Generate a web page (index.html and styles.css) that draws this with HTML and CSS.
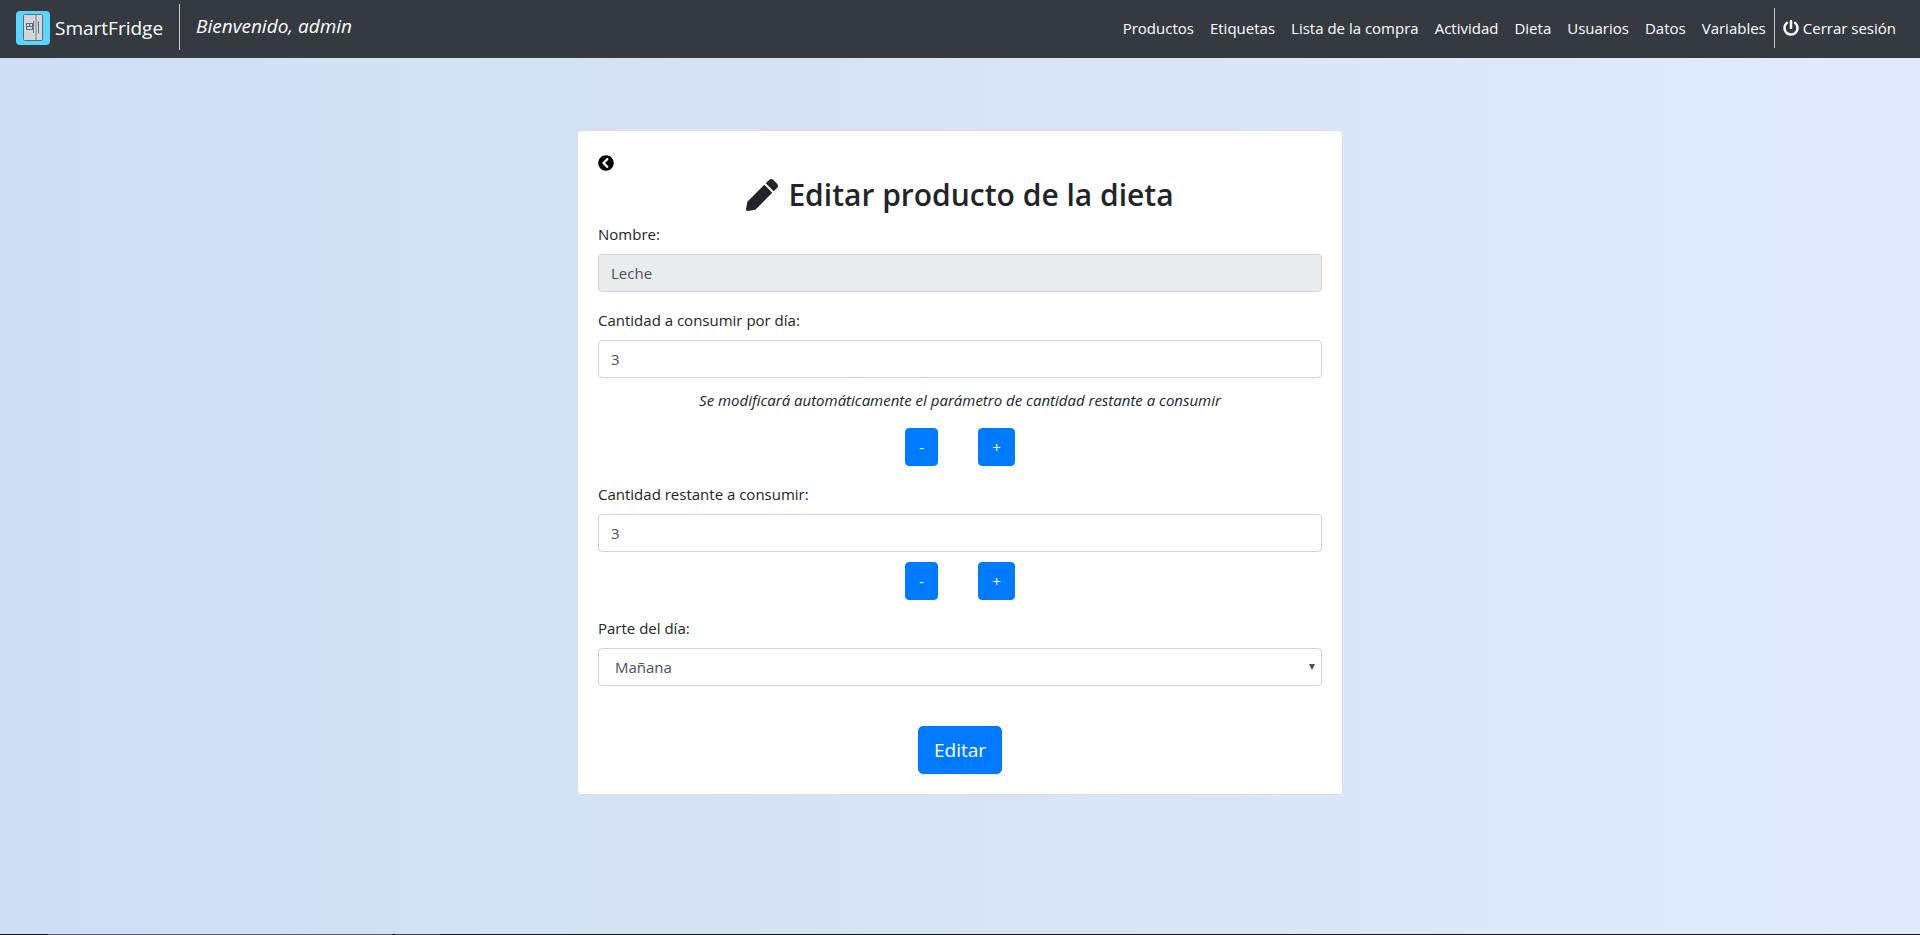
FILE: index.html
```html
<!DOCTYPE html>
<html lang="es">
<head>
<meta charset="utf-8">
<meta name="viewport" content="width=device-width, initial-scale=1">
<title>SmartFridge</title>
<link rel="stylesheet" href="styles.css">
</head>
<body>
<header class="navbar">
  <a class="brand" href="#">
    <svg class="brand-logo" viewBox="0 0 34 34" aria-hidden="true">
      <rect width="34" height="34" rx="4" fill="#5dd4fa"/>
      <rect x="7.500" y="3.500" width="19" height="26" rx="1" fill="#d5d6db" stroke="#566f7c"/>
      <path d="M19 4h2v25h-2z" fill="#a3abb2"/>
      <path d="M10.500 12.500h6v6h-6zM10.500 15.500h6M13.500 12.500v3M17.500 10v12M22.500 10.500v12" fill="none" stroke="#566f7c"/>
    </svg>
    <span>SmartFridge</span>
  </a>
  <p class="welcome">Bienvenido, admin</p>
  <nav class="menu">
    <a href="#">Productos</a>
    <a href="#">Etiquetas</a>
    <a href="#">Lista de la compra</a>
    <a href="#">Actividad</a>
    <a href="#">Dieta</a>
    <a href="#">Usuarios</a>
    <a href="#">Datos</a>
    <a href="#">Variables</a>
    <a class="logout" href="#">
      <svg class="icon" viewBox="0 0 512 512" aria-hidden="true"><path fill="currentColor" d="M400 54.100c63 45 104 118.600 104 201.900 0 136.800-110.800 247.700-247.500 248C120 504.300 8.200 393 8 256.400 7.900 173.100 48.900 99.300 111.800 54.200c11.700-8.300 28-4.800 35 7.700L162.600 90c5.900 10.500 3.100 23.800-6.600 31-41.500 30.800-68 79.600-68 134.900-.1 92.300 74.500 168.100 168 168.100 91.600 0 168.600-74.200 168-169.100-.3-51.800-24.700-101.800-68.100-134-9.700-7.200-12.400-20.500-6.500-30.900l15.800-28.100c7-12.400 23.200-16.100 34.800-7.800zM296 264V24c0-13.300-10.700-24-24-24h-32c-13.300 0-24 10.700-24 24v240c0 13.300 10.700 24 24 24h32c13.300 0 24-10.700 24-24z"/></svg>
      <span>Cerrar sesión</span>
    </a>
  </nav>
</header>
<main class="page">
  <form class="card">
    <a class="back" href="#" aria-label="Volver">
      <svg class="icon" viewBox="0 0 512 512" aria-hidden="true"><path fill="currentColor" d="M256 504C119 504 8 393 8 256S119 8 256 8s248 111 248 248-111 248-248 248zM142.100 273l135.500 135.500c9.400 9.400 24.600 9.400 33.900 0l17-17c9.400-9.400 9.400-24.600 0-33.900L226.900 256l101.600-101.600c9.400-9.400 9.400-24.600 0-33.900l-17-17c-9.400-9.400-24.600-9.400-33.900 0L142.100 239c-9.400 9.400-9.400 24.600 0 34z"/></svg>
    </a>
    <h2 class="title">
      <svg class="title-icon" viewBox="0 0 512 512" aria-hidden="true"><path fill="currentColor" d="M497.900 142.100l-46.100 46.100c-4.700 4.700-12.300 4.700-17 0l-111-111c-4.700-4.700-4.700-12.300 0-17l46.100-46.100c18.700-18.700 49.100-18.700 67.900 0l60.100 60.100c18.800 18.700 18.800 49.100 0 67.900zM284.200 99.800L21.600 362.400.4 483.900c-2.900 16.400 11.400 30.600 27.800 27.800l121.500-21.300 262.600-262.600c4.700-4.700 4.700-12.300 0-17l-111-111c-4.800-4.700-12.400-4.700-17.100 0z"/></svg>
      <span>Editar producto de la dieta</span>
    </h2>
    <div class="group">
      <label for="nombre">Nombre:</label>
      <input class="control" id="nombre" type="text" value="Leche" disabled>
    </div>
    <div class="group">
      <label for="cantidad">Cantidad a consumir por día:</label>
      <input class="control" id="cantidad" type="text" value="3">
      <p class="hint">Se modificará automáticamente el parámetro de cantidad restante a consumir</p>
      <div class="stepper">
        <button class="btn" type="button">-</button>
        <button class="btn" type="button">+</button>
      </div>
    </div>
    <div class="group">
      <label for="restante">Cantidad restante a consumir:</label>
      <input class="control" id="restante" type="text" value="3">
      <div class="stepper">
        <button class="btn" type="button">-</button>
        <button class="btn" type="button">+</button>
      </div>
    </div>
    <div class="group">
      <label for="parte">Parte del día:</label>
      <div class="select-wrap">
        <select class="control" id="parte">
          <option>Mañana</option>
          <option>Tarde</option>
          <option>Noche</option>
        </select>
      </div>
    </div>
    <button class="btn btn-lg" type="submit">Editar</button>
  </form>
</main>
<div class="bottom-edge"></div>
</body>
</html>
```
FILE: styles.css
```css
* { box-sizing: border-box; }

body {
  display: flex;
  flex-direction: column;
  min-height: 100vh;
  margin: 0;
  background: linear-gradient(to right, #cfdef5, #d2e1f3 25%, #d9e5f7 55%, #e0eafc);
  color: #212529;
  font: 15px/24px "Open Sans", "Noto Sans", sans-serif;
}

.navbar {
  display: flex;
  align-items: center;
  min-height: 58px;
  padding: 0 16px 2px;
  background: #343a40;
  color: #fff;
}

.navbar a { color: inherit; text-decoration: none; }

.brand {
  display: flex;
  align-items: center;
  gap: 5px;
  font-size: 19px;
}

.brand-logo { width: 34px; height: 34px; }

.welcome {
  margin: 0 0 2px 16px;
  padding: 10px 16px 12px;
  border-left: 1px solid #ccc;
  font-size: 19px;
  font-style: italic;
}

.menu {
  display: flex;
  align-items: center;
  margin-left: auto;
}

.menu a { padding: 8px; }

.menu .logout {
  display: flex;
  align-items: center;
  gap: 4px;
  border-left: 1px solid #ccc;
}

.icon { display: block; width: 16px; height: 16px; }

.page {
  display: flex;
  flex: 1;
  align-items: flex-start;
  justify-content: center;
  padding: 72px 16px 16px;
}

.card {
  display: flex;
  flex-direction: column;
  width: 100%;
  max-width: 766px;
  padding: 20px;
  border: 1px solid #dfdfdf;
  border-radius: 4px;
  background: #fff;
}

.back { align-self: flex-start; padding: 4px 0; color: #000; }

.title {
  display: flex;
  align-items: center;
  justify-content: center;
  gap: 10px;
  margin: 0 0 8px;
  font-size: 30px;
  font-weight: 600;
  line-height: 39px;
}

.title-icon { width: 32px; height: 32px; }

.group { display: flex; flex-direction: column; margin-bottom: 16px; }

.group label { margin-bottom: 8px; }

.control {
  width: 100%;
  height: 38px;
  padding: 6px 12px;
  border: 1px solid #ced4da;
  border-radius: 4px;
  background: #fff;
  color: #495057;
  font: inherit;
}

.control:disabled { background: #e9ecef; }

.select-wrap { display: grid; align-items: center; }

.select-wrap > *,
.select-wrap::after { grid-area: 1 / 1; }

.select-wrap select { padding-left: 16px; appearance: none; }

.select-wrap::after {
  justify-self: end;
  margin-right: 7px;
  border: 3px solid transparent;
  border-top: 6px solid #495057;
  border-bottom: 0;
  content: "";
  pointer-events: none;
}

.hint { margin: 10px 0 6px; font-style: italic; text-align: center; }

.stepper {
  display: flex;
  justify-content: center;
  gap: 40px;
  margin-top: 10px;
}

.btn {
  padding: 6px 13px;
  border: 1px solid #007bff;
  border-radius: 4px;
  background: #007bff;
  color: #fff;
  font: inherit;
}

.btn-lg {
  align-self: center;
  margin-top: 24px;
  padding: 8px 15px;
  border-radius: 5px;
  font-size: 19px;
  line-height: 30px;
}

.bottom-edge {
  height: 1px;
  background: linear-gradient(to right, #15171c 48px, #5c5f66 48px 392px, #15171c 392px 395px, #3c3f46 395px 440px, #15171c 440px);
}
```
